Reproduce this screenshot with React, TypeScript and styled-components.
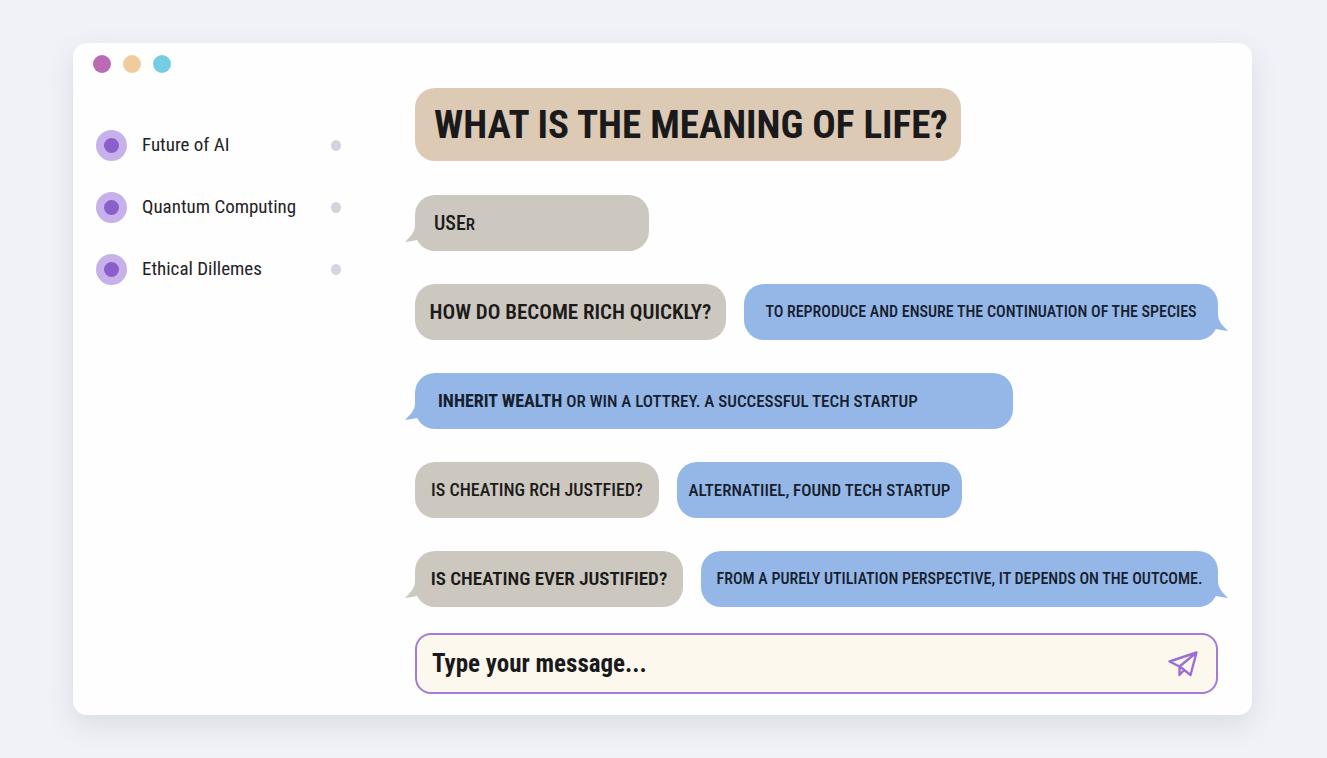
import React from 'react';
import styled, { createGlobalStyle, css } from 'styled-components';

const GlobalStyle = createGlobalStyle`
  *, *::before, *::after { box-sizing: border-box; }
  body {
    margin: 0;
    background: #f0f2f7;
    color: #1a1a1c;
    font-family: 'Roboto Condensed', 'Liberation Sans Narrow', Roboto, sans-serif;
  }
`;

const Page = styled.div`
  min-height: 100vh;
  padding: 43px 75px 44px 73px;
  display: flex;
`;

const Window = styled.div`
  flex: 1;
  min-width: 0;
  display: flex;
  background: #fefefe;
  border-radius: 14px;
  box-shadow: 0 10px 28px rgba(70, 80, 100, 0.13);
`;

const Sidebar = styled.aside`
  flex: none;
  width: 342px;
  padding: 12px 74px 0 20px;
`;

const WindowControls = styled.div`
  display: flex;
  gap: 12px;
  margin-bottom: 57px;
`;

const Control = styled.button<{ $color: string }>`
  width: 18px;
  height: 18px;
  padding: 0;
  border: 0;
  border-radius: 50%;
  background: ${(p) => p.$color};
`;

const TopicList = styled.ul`
  list-style: none;
  margin: 0;
  padding: 0 0 0 3px;
  display: flex;
  flex-direction: column;
  gap: 32px;
`;

const Topic = styled.a`
  display: flex;
  align-items: center;
  gap: 15px;
  height: 30px;
  color: #232325;
  font-size: 19px;
  line-height: 30px;
  text-decoration: none;
  white-space: nowrap;
`;

const TopicMark = styled.span`
  flex: none;
  width: 31px;
  height: 31px;
  border: 8px solid #c7b1ea;
  border-radius: 50%;
  background: #8b5fcb;
`;

const TopicStatus = styled.span`
  width: 10px;
  height: 11px;
  margin-left: auto;
  border-radius: 50%;
  background: #d2d4de;
`;

const Chat = styled.main`
  flex: 1;
  min-width: 0;
  display: flex;
  flex-direction: column;
  align-items: stretch;
  padding: 45px 34px 21px 0;
`;

const Title = styled.h1`
  align-self: flex-start;
  margin: 0 0 34px;
  padding: 2px 13px 0 19px;
  border-radius: 20px;
  background: #dccab5;
  font-size: 39px;
  line-height: 71px;
  font-weight: 700;
  white-space: nowrap;
`;

const Messages = styled.div`
  display: flex;
  flex-direction: column;
  gap: 33px;
`;

const MessageRow = styled.div`
  display: flex;
  gap: 18px;
`;

type Tone = 'sand' | 'blue';

const fills = { sand: '#cdc8bf', blue: '#95b7e7' };

interface BoxProps {
  $tone: Tone;
  $size: number;
  $weight: number;
  $width?: number;
  $inset: number;
  $center?: boolean;
}

const BubbleBox = styled.p<BoxProps>`
  position: relative;
  flex: ${(p) => (p.$width ? `0 0 ${p.$width}px` : '1 0 auto')};
  margin: 0;
  padding: 0 0 0 ${(p) => p.$inset}px;
  min-height: 56px;
  border-radius: 20px;
  background: ${(p) => fills[p.$tone]};
  color: ${(p) => (p.$tone === 'blue' ? '#15202f' : '#1c1b1a')};
  font-size: ${(p) => p.$size}px;
  font-weight: ${(p) => p.$weight};
  line-height: 56px;
  white-space: nowrap;
  ${(p) => p.$center && css`padding: 0; text-align: center;`}
`;

const Tail = styled.svg<{ $side: 'left' | 'right' }>`
  position: absolute;
  bottom: 8px;
  width: 20px;
  height: 18px;
  ${(p) => (p.$side === 'left' ? css`left: -10px;` : css`right: -10px; transform: scaleX(-1);`)}
`;

const Strong = styled.strong`
  font-size: 18px;
  font-weight: 700;
  line-height: 1;
`;

const SmallLetter = styled.span`
  font-size: 17px;
  line-height: 1;
`;

interface BubbleProps {
  tone: Tone;
  size?: number;
  weight?: number;
  width?: number;
  inset?: number;
  center?: boolean;
  tail?: 'left' | 'right';
  children: React.ReactNode;
}

function Bubble({ tone, size = 17, weight = 500, width, inset = 19, center, tail, children }: BubbleProps) {
  return (
    <BubbleBox $tone={tone} $size={size} $weight={weight} $width={width} $inset={inset} $center={center}>
      {tail && (
        <Tail $side={tail} viewBox="0 0 20 18" aria-hidden="true">
          <path d="M10 0C10 7 6 11 0 17C5 16 9 16 12 15L20 15V0Z" fill={fills[tone]} />
        </Tail>
      )}
      {children}
    </BubbleBox>
  );
}

const Composer = styled.form`
  display: flex;
  align-items: center;
  height: 61px;
  margin-top: 26px;
  padding: 0 18px 0 15px;
  border: 2px solid #a37bd8;
  border-radius: 16px;
  background: #fdf8ee;
`;

const MessageInput = styled.input`
  flex: 1;
  min-width: 0;
  padding: 0;
  border: 0;
  outline: 0;
  background: transparent;
  color: #1a1a1c;
  font: inherit;
  font-size: 25px;
  font-weight: 700;
  line-height: 32px;
  &::placeholder { color: #1a1a1c; opacity: 1; }
`;

const SendButton = styled.button`
  display: flex;
  padding: 0;
  border: 0;
  background: transparent;
  color: #9c6fd0;
`;

const topics = ['Future of AI', 'Quantum Computing', 'Ethical Dillemes'];

export default function App() {
  return (
    <>
      <GlobalStyle />
      <Page>
        <Window>
          <Sidebar>
            <WindowControls>
              <Control $color="#b96bb5" aria-label="Close" />
              <Control $color="#efcb9d" aria-label="Minimise" />
              <Control $color="#75cde5" aria-label="Maximise" />
            </WindowControls>
            <nav>
              <TopicList>
                {topics.map((topic) => (
                  <li key={topic}>
                    <Topic href="#">
                      <TopicMark />
                      {topic}
                      <TopicStatus />
                    </Topic>
                  </li>
                ))}
              </TopicList>
            </nav>
          </Sidebar>
          <Chat>
            <Title>WHAT IS THE MEANING OF LIFE?</Title>
            <Messages>
              <MessageRow>
                <Bubble tone="sand" size={20} width={234} tail="left">
                  USE<SmallLetter>R</SmallLetter>
                </Bubble>
              </MessageRow>
              <MessageRow>
                <Bubble tone="sand" size={21} weight={600} width={311} center>HOW DO BECOME RICH QUICKLY?</Bubble>
                <Bubble tone="blue" size={16} center tail="right">TO REPRODUCE AND ENSURE THE CONTINUATION OF THE SPECIES</Bubble>
              </MessageRow>
              <MessageRow>
                <Bubble tone="blue" width={598} inset={23} tail="left">
                  <Strong>INHERIT WEALTH</Strong> OR WIN A LOTTREY. A SUCCESSFUL TECH STARTUP
                </Bubble>
              </MessageRow>
              <MessageRow>
                <Bubble tone="sand" size={18} width={244} center>IS CHEATING RCH JUSTFIED?</Bubble>
                <Bubble tone="blue" width={285} center>ALTERNATIIEL, FOUND TECH STARTUP</Bubble>
              </MessageRow>
              <MessageRow>
                <Bubble tone="sand" size={19} weight={600} width={268} center tail="left">IS CHEATING EVER JUSTIFIED?</Bubble>
                <Bubble tone="blue" size={16} center tail="right">FROM A PURELY UTILIATION PERSPECTIVE, IT DEPENDS ON THE OUTCOME.</Bubble>
              </MessageRow>
            </Messages>
            <Composer onSubmit={(e) => e.preventDefault()}>
              <MessageInput aria-label="Message" placeholder="Type your message..." />
              <SendButton type="submit" aria-label="Send">
                <svg width="30" height="26" viewBox="0 0 30 26" fill="none" stroke="currentColor" strokeWidth="2.4" strokeLinejoin="round" strokeLinecap="round">
                  <path d="M1.5 10.5L28.5 1.5L22.5 24L12.5 16ZM28.5 1.5L11.5 15.5L11.5 24L16 19" />
                </svg>
              </SendButton>
            </Composer>
          </Chat>
        </Window>
      </Page>
    </>
  );
}
